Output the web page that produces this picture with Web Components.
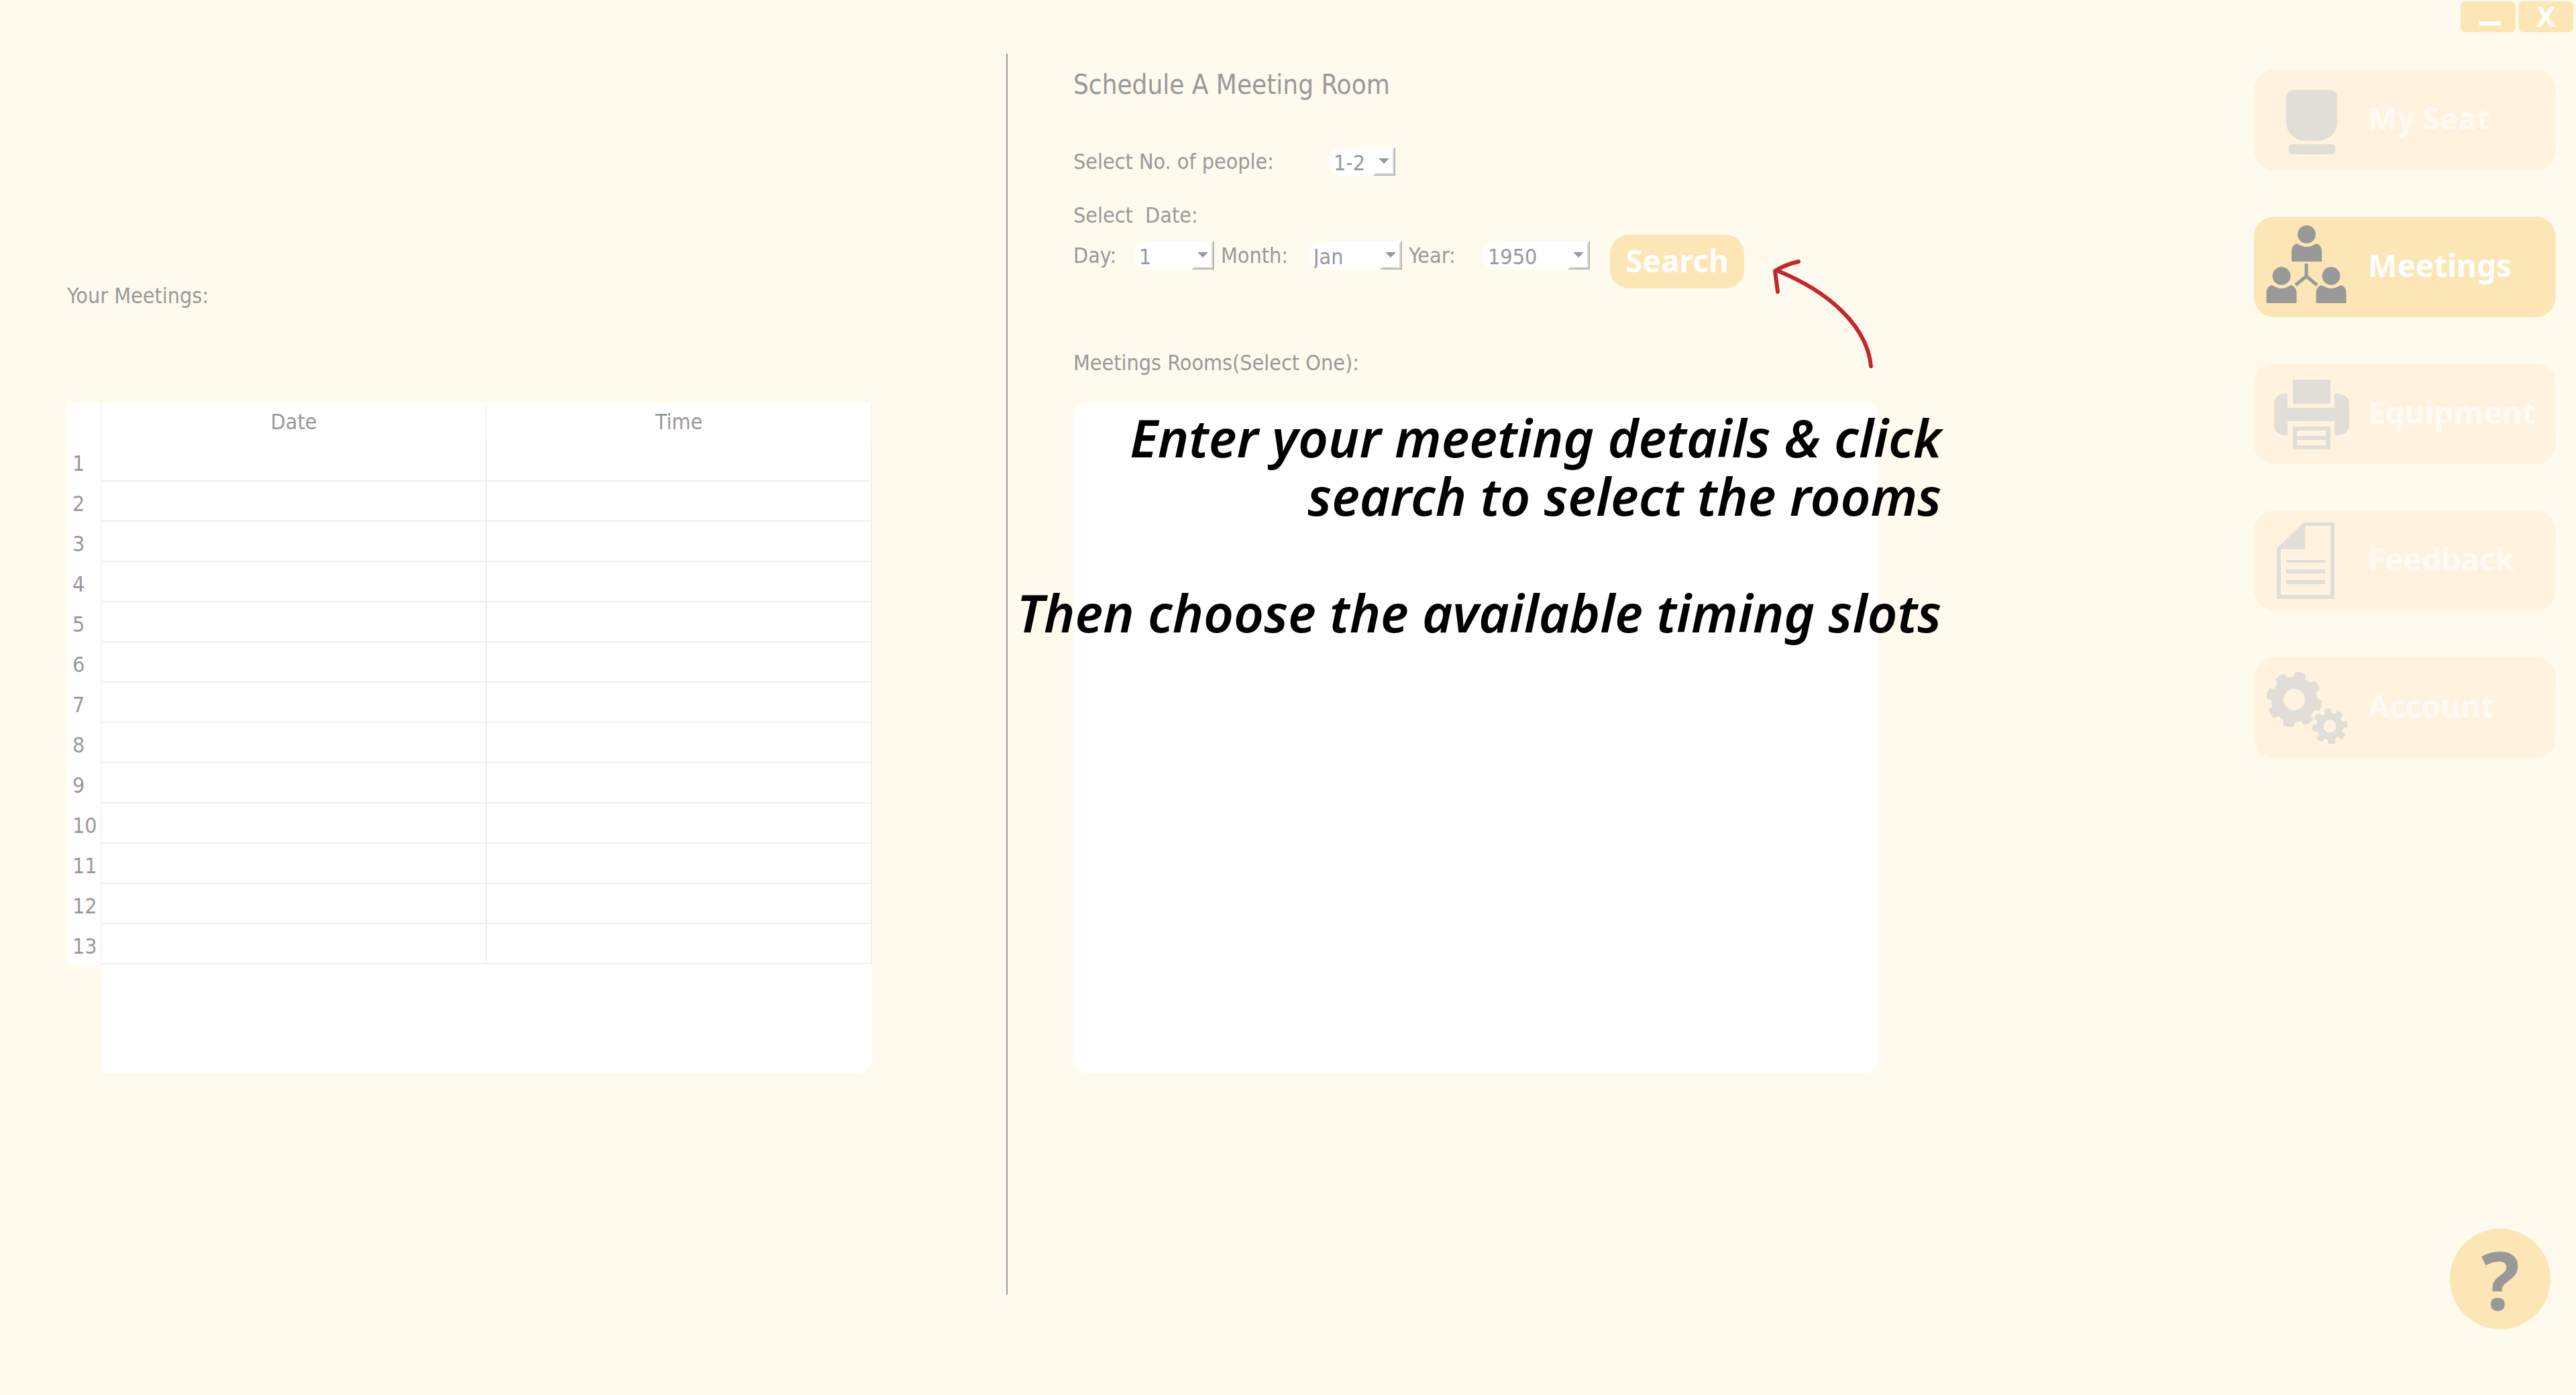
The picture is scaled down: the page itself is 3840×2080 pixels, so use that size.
<!DOCTYPE html>
<html lang="en">
<head>
<meta charset="utf-8">
<meta name="viewport" content="width=device-width, initial-scale=1">
<title>Meetings</title>
<style>
  :root {
    --page: #fffaee;
    --accent: #fde6b5;
    --accent-soft: #fff3df;
    --ink: #999;
    --ink-soft: #e1ded7;
    --ui: "DejaVu Sans Condensed", "DejaVu Sans", sans-serif;
    --brand: "Noto Sans", "Open Sans", sans-serif;
  }
  body { margin: 0; background: var(--page); color: var(--ink); font: 32px/42px var(--ui); }
</style>
</head>
<body>
<room-app></room-app>

<template id="room-app">
  <style>
    :host { display: grid; grid-template-columns: 1500fr 2px 1858fr 480px; min-height: 100vh; }
    .left { padding: 420px 200px 0 100px; }
    .rule { background: var(--ink); margin: 80px 0 150px; }
    .right { padding: 100px 560px 0 98px; }
    .side { display: flex; flex-direction: column; }
    nav { display: flex; flex-direction: column; gap: 69px; padding: 56px 30px 0 0; }
    help-button { margin: auto 38px 98px auto; }
  </style>
  <meetings-table class="left"></meetings-table>
  <div class="rule"></div>
  <schedule-form class="right"></schedule-form>
  <div class="side">
    <window-controls></window-controls>
    <nav>
      <nav-item icon="seat">My Seat</nav-item>
      <nav-item icon="people" active>Meetings</nav-item>
      <nav-item icon="printer">Equipment</nav-item>
      <nav-item icon="page">Feedback</nav-item>
      <nav-item icon="gears">Account</nav-item>
    </nav>
    <help-button></help-button>
  </div>
</template>

<template id="window-controls">
  <style>
    :host { display: flex; justify-content: flex-end; gap: 4px; padding: 2px 4px 0 0; }
    button { width: 82px; height: 46px; padding: 0 0 2px; border: 0; border-radius: 8px; background: var(--accent);
      color: #fff; font: 700 42px/44px var(--brand); display: flex; justify-content: center; align-items: center; }
    svg { display: block; }
  </style>
  <button aria-label="Minimize"><svg width="82" height="44" fill="#fff"><rect x="28" y="30" width="32" height="6"/></svg></button>
  <button aria-label="Close">X</button>
</template>

<template id="nav-item">
  <style>
    :host { display: block; }
    button { display: flex; align-items: center; width: 100%; height: 150px; padding: 0; border: 0;
      border-radius: 30px; background: var(--accent-soft); color: #fffbf3; font: 700 46px/60px var(--brand); text-align: left; }
    svg { flex: none; width: 170px; height: 150px; fill: var(--ink-soft); stroke: none; }
    span { padding-bottom: 6px; }
    :host([active]) button { background: var(--accent); color: #fff; }
    :host([active]) svg { fill: var(--ink); }
  </style>
  <button><svg viewBox="0 0 170 150" aria-hidden="true"></svg><span><slot></slot></span></button>
</template>

<template id="help-button">
  <style>
    :host { display: block; }
    button { width: 150px; height: 150px; padding: 0; border: 0; border-radius: 50%; background: var(--accent);
      color: var(--ink); font: 700 120px/150px var(--brand); text-align: center; }
  </style>
  <button>?</button>
</template>

<template id="meetings-table">
  <style>
    :host { display: block; }
    h2 { margin: 0 0 138px; font: inherit; }
    table { width: 100%; table-layout: fixed; border-collapse: separate; border-spacing: 0; background: #fff; }
    th, td { box-sizing: border-box; padding: 0; font-weight: 400; }
    thead th { height: 58px; border-right: 2px solid #f5f5f5; }
    tbody th { height: 60px; padding: 8px 0 2px 8px; text-align: left; border-right: 2px solid #f5f5f5; }
    td { border-right: 2px solid #eee; border-bottom: 2px solid #eee; }
    .num { width: 52px; }
    .rest { height: 162px; margin-left: 52px; background: #fff; border-bottom-right-radius: 20px; }
  </style>
  <h2>Your Meetings:</h2>
  <table>
    <thead><tr><th class="num"></th><th scope="col">Date</th><th scope="col">Time</th></tr></thead>
    <tbody></tbody>
  </table>
  <div class="rest"></div>
</template>

<template id="pick-list">
  <style>
    :host { display: flex; }
    label { width: var(--label); white-space: nowrap; }
    .box { position: relative; width: var(--field); height: 42px; }
    select { appearance: none; box-sizing: border-box; width: 100%; height: 42px; margin: 0; border: 0;
      padding: 2px 32px 0 8px; border-radius: 20px 0 0 20px; background: #fff; color: inherit; font: inherit; display: block; }
    svg { position: absolute; right: 0; bottom: 0; pointer-events: none; }
  </style>
  <label for="s"><slot></slot></label>
  <div class="box">
    <select id="s"></select>
    <svg width="32" height="42" aria-hidden="true">
      <path d="M30 0h2v42H0v-2h30V0z" fill="#b8b8b8"/>
      <path d="M28 2h2v38H2v-2h26z" fill="#dcdcdc"/>
      <path d="M8 16h14v2h-2v2h-2v2h-2v2h-2v-2h-2v-2h-2v-2H8z" fill="#999"/>
    </svg>
  </div>
</template>

<template id="schedule-form">
  <style>
    :host { display: block; }
    h1 { margin: 0 0 68px; font: 400 40px/52px var(--ui); }
    p { margin: 0; white-space: pre; }
    .date { margin: 38px 0 8px; }
    .row { display: flex; align-items: flex-start; gap: 10px; height: 80px; margin-bottom: 90px; }
    .row pick-list { margin-top: 10px; }
    .people { --label: 380px; --field: 100px; }
    .day { --label: 90px; --field: 120px; }
    .month { --label: 130px; --field: 140px; }
    .year { --label: 110px; --field: 160px; }
    .go { position: relative; margin-left: 20px; }
    button { width: 200px; height: 80px; padding: 0 0 4px; border: 0; border-radius: 28px; background: var(--accent);
      color: #fff; font: 700 46px/76px var(--brand); }
    .go svg { position: absolute; left: 236px; top: 30px; }
    .rooms { position: relative; height: 1000px; margin-top: 38px; border-radius: 20px; background: #fff; }
    .note { position: absolute; right: -94px; top: 9px; color: #000; text-align: right;
      font: italic 600 78px/87px var(--brand); white-space: nowrap; }
  </style>
  <h1>Schedule A Meeting Room</h1>
  <pick-list class="people" options="1-2,3-5,6-10">Select No. of people:</pick-list>
  <p class="date">Select  Date:</p>
  <div class="row">
    <pick-list class="day" options="1,2,3">Day:</pick-list>
    <pick-list class="month" options="Jan,Feb,Mar">Month:</pick-list>
    <pick-list class="year" options="1950,1951,1952">Year:</pick-list>
    <div class="go">
      <button>Search</button>
      <svg width="164" height="176" viewBox="0 0 164 176" fill="none" stroke="#c1272d" stroke-width="6" stroke-linecap="round" stroke-linejoin="round" aria-hidden="true">
        <path d="M12 23C89 54 147 105 153 166"/>
        <path d="M45 10Q24 15 10 24L14 55"/>
      </svg>
    </div>
  </div>
  <p>Meetings Rooms(Select One):</p>
  <div class="rooms">
    <div class="note">Enter your meeting details &amp; click<br>search to select the rooms<br><br>Then choose the available timing slots</div>
  </div>
</template>

<script>
  class Part extends HTMLElement {
    constructor() {
      super();
      this.attachShadow({ mode: "open" })
        .append(document.getElementById(this.localName).content.cloneNode(true));
    }
    $(selector) { return this.shadowRoot.querySelector(selector); }
  }

  // Outline of a toothed wheel with a round hole, filled by the even-odd rule.
  function gear(cx, cy, outer, body, hole, turn) {
    const at = (r, deg) => {
      const a = (deg - 90) * Math.PI / 180;
      return (cx + r * Math.cos(a)).toFixed(1) + " " + (cy + r * Math.sin(a)).toFixed(1);
    };
    const pts = [];
    for (let i = 0; i < 8; i++) {
      const m = turn + i * 45;
      pts.push(at(body, m - 15), at(outer - 1, m - 11), at(outer, m), at(outer - 1, m + 11), at(body, m + 15), at(body, m + 22));
    }
    return `<path fill-rule="evenodd" d="M${pts.join("L")}ZM${cx - hole} ${cy}a${hole} ${hole} 0 1 0 ${2 * hole} 0a${hole} ${hole} 0 1 0 ${-2 * hole} 0Z"/>`;
  }

  const person = (x, y) => `<circle cx="${x}" cy="${y}" r="13.5"/>
    <path d="M${x - 22.5} ${y + 40.5}v-16q0-8 8-11q8 5 14.5 5t14.5-5q8 3 8 11v16z"/>`;

  const icons = {
    seat: `<path d="M60 30h52q12 0 12 12v37q0 12-9 19t-18 8H75q-9 0-18-8t-9-19V42q0-12 12-12z"/>
      <rect x="52" y="111" width="69" height="15" rx="6"/>`,
    people: person(78.5, 26.5) + person(41, 88.5) + person(115, 88.5) +
      `<path d="M78 70v19M62 102l16-13 16 13" fill="none" stroke="#999" stroke-width="5"/>`,
    printer: `<path d="M58 24h56v36H58zM50 45v21h70V45h6q16 2 16 16v30q0 14-16 16h-6V86H50v21h-6q-14-2-14-16V61q0-14 14-16z"/>
      <path fill-rule="evenodd" d="M58 94h56v34H58zM64 100v8h43v-8zM64 114v8h43v-8z"/>`,
    page: `<path fill-rule="evenodd" d="M34 57 74 18h46v114H34zM76 23v35H40v68h74V23z"/>
      <path d="M48 74h58v4H48zM48 88h58v6H48zM48 104h58v6H48z"/>`,
    gears: gear(60, 63, 42, 34, 16, 13) + gear(113, 103, 27, 20, 9.5, -7)
  };

  customElements.define("window-controls", class extends Part {});
  customElements.define("help-button", class extends Part {
    constructor() { super(); this.$("button").setAttribute("aria-label", "Help"); }
  });
  customElements.define("nav-item", class extends Part {
    connectedCallback() { this.$("svg").innerHTML = icons[this.getAttribute("icon")]; }
  });
  customElements.define("pick-list", class extends Part {
    connectedCallback() {
      this.$("select").replaceChildren(...this.getAttribute("options").split(",").map(t => new Option(t)));
    }
  });
  customElements.define("meetings-table", class extends Part {
    constructor() {
      super();
      this.$("tbody").innerHTML = Array.from({ length: 13 }, (_, i) =>
        `<tr><th scope="row">${i + 1}</th><td></td><td></td></tr>`).join("");
    }
  });
  customElements.define("schedule-form", class extends Part {});
  customElements.define("room-app", class extends Part {});
</script>
</body>
</html>
